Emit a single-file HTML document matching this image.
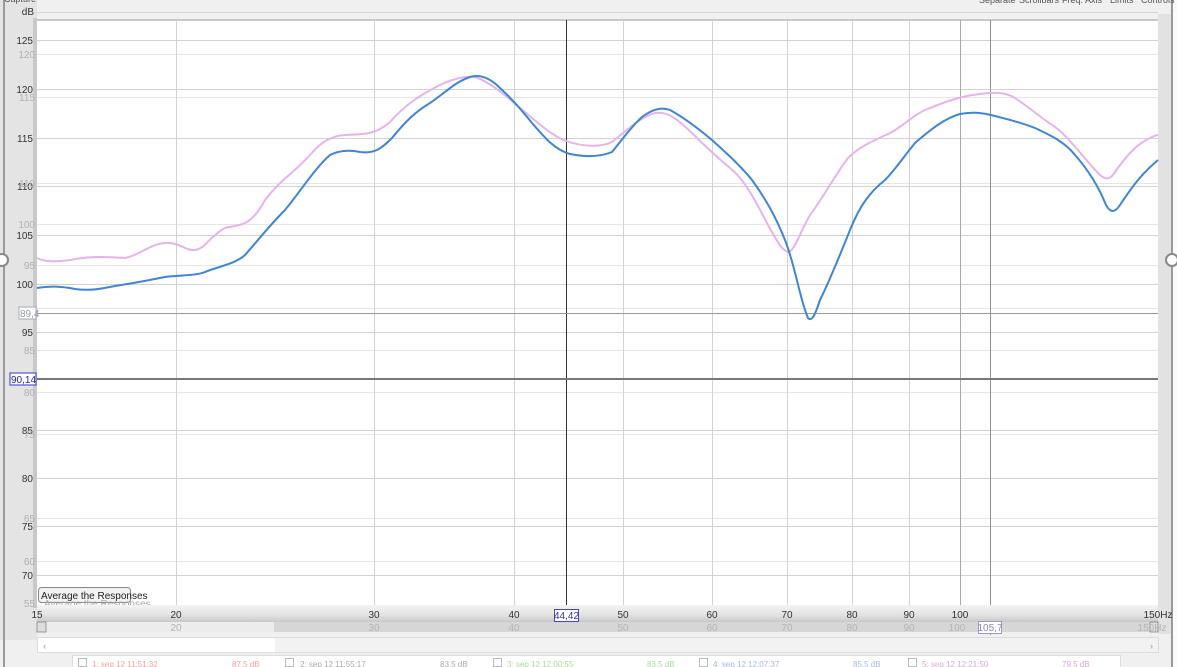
<!DOCTYPE html>
<html><head><meta charset="utf-8"><style>
html,body{margin:0;padding:0;width:1177px;height:667px;overflow:hidden;background:#f0f0f0;font-family:"Liberation Sans",sans-serif}
svg{display:block}
text{font-family:"Liberation Sans",sans-serif}
</style></head><body>
<svg width="1177" height="667" viewBox="0 0 1177 667" xmlns="http://www.w3.org/2000/svg">
<defs>
<linearGradient id="ax" x1="0" y1="0" x2="0" y2="1"><stop offset="0" stop-color="#f4f4f4"/><stop offset="0.6" stop-color="#e2e2e2"/><stop offset="1" stop-color="#c8c8c8"/></linearGradient>
</defs>
<rect x="0" y="0" width="1177" height="667" fill="#f0f0f0"/>
<!-- left strip -->
<rect x="0" y="0" width="37" height="640" fill="#e4e4e4"/>
<rect x="3" y="0" width="2" height="667" fill="#9a9a9a"/>
<rect x="33" y="18" width="4" height="590" fill="#c9c9c9"/>
<!-- right strip -->
<rect x="1158" y="14" width="14" height="620" fill="#e2e2e2"/>
<rect x="1171" y="0" width="2" height="667" fill="#9a9a9a"/>
<rect x="1173" y="0" width="4" height="667" fill="#fafafa"/>
<!-- top line -->
<rect x="37" y="12" width="1121" height="1" fill="#d6d6d6"/>
<!-- plot -->
<rect x="37" y="20" width="1121" height="585" fill="#ffffff"/>
<rect x="37" y="19" width="1121" height="2" fill="#c8c8c8"/>
<g stroke="#e6e6e6" stroke-width="1">
<line x1="37" y1="54.5" x2="1158" y2="54.5"/><line x1="37" y1="97.5" x2="1158" y2="97.5"/><line x1="37" y1="183.5" x2="1158" y2="183.5"/><line x1="37" y1="224.5" x2="1158" y2="224.5"/><line x1="37" y1="265.5" x2="1158" y2="265.5"/><line x1="37" y1="308.5" x2="1158" y2="308.5"/><line x1="37" y1="350.5" x2="1158" y2="350.5"/><line x1="37" y1="392.5" x2="1158" y2="392.5"/><line x1="37" y1="434.5" x2="1158" y2="434.5"/><line x1="37" y1="518.5" x2="1158" y2="518.5"/><line x1="37" y1="561.5" x2="1158" y2="561.5"/>
</g>
<g stroke="#d2d2d2" stroke-width="1">
<line x1="37" y1="40.5" x2="1158" y2="40.5"/><line x1="37" y1="89.5" x2="1158" y2="89.5"/><line x1="37" y1="138.5" x2="1158" y2="138.5"/><line x1="37" y1="186.5" x2="1158" y2="186.5"/><line x1="37" y1="235.5" x2="1158" y2="235.5"/><line x1="37" y1="284.5" x2="1158" y2="284.5"/><line x1="37" y1="332.5" x2="1158" y2="332.5"/><line x1="37" y1="430.5" x2="1158" y2="430.5"/><line x1="37" y1="478.5" x2="1158" y2="478.5"/><line x1="37" y1="526.5" x2="1158" y2="526.5"/><line x1="37" y1="575.5" x2="1158" y2="575.5"/>
<line x1="176.5" y1="20" x2="176.5" y2="605"/><line x1="374.5" y1="20" x2="374.5" y2="605"/><line x1="514.5" y1="20" x2="514.5" y2="605"/><line x1="623.5" y1="20" x2="623.5" y2="605"/><line x1="712.5" y1="20" x2="712.5" y2="605"/><line x1="787.5" y1="20" x2="787.5" y2="605"/><line x1="852.5" y1="20" x2="852.5" y2="605"/><line x1="909.5" y1="20" x2="909.5" y2="605"/>
</g>
<line x1="960.5" y1="20" x2="960.5" y2="605" stroke="#a8a8a8"/>
<line x1="990.5" y1="20" x2="990.5" y2="635" stroke="#909090"/>
<line x1="566.5" y1="20" x2="566.5" y2="612" stroke="#333"/>
<line x1="37" y1="313.5" x2="1158" y2="313.5" stroke="#999"/>
<line x1="37" y1="379" x2="1158" y2="379" stroke="#777" stroke-width="2"/>
<!-- curves -->
<path fill="none" stroke="#e4b4ea" stroke-width="2" d="M37,258 C45,262 55,262 70,260 C85,257 100,256 125,258 C140,255 150,244 165,243 C180,242 185,251 195,250 C205,249 210,236 225,228 C240,224 250,228 265,200 C280,180 295,172 310,155 C320,143 330,136 345,135 C365,134 375,135 390,122 C405,105 420,95 440,85 C455,78 465,76 475,77 C490,82 505,95 520,108 C535,120 550,135 566,141 C580,146 600,148 612,142 C625,132 640,117 655,113 C670,111 680,122 692,133 C705,146 718,158 730,168 C745,180 755,200 768,225 C778,243 783,252 789,252 C796,248 800,232 810,215 C825,195 835,175 848,158 C860,146 875,140 890,133 C902,127 912,116 925,110 C945,102 960,96 980,94 C995,92 1005,92 1015,98 C1030,108 1040,117 1055,127 C1070,138 1085,160 1100,175 C1106,180 1110,180 1115,172 C1125,158 1135,145 1150,138 C1154,136 1156,135 1158,135"/>
<path fill="none" stroke="#3f85d3" stroke-width="2" d="M37,288 C50,286 60,286 75,289 C90,291 100,289 115,286 C135,283 150,280 165,277 C180,275 195,276 205,272 C220,266 235,264 245,255 C260,238 270,225 285,210 C300,192 315,168 330,155 C340,150 350,150 360,152 C375,154 382,148 392,138 C405,122 415,112 430,103 C445,93 455,82 470,77 C480,74 490,78 500,88 C510,97 520,108 532,123 C545,138 555,150 570,154 C585,157 600,157 612,152 C622,140 630,128 642,117 C650,111 660,106 670,110 C685,118 700,130 712,140 C725,152 740,165 752,180 C765,198 775,215 785,240 C795,265 800,300 808,318 C812,322 815,315 820,300 C830,280 840,255 850,230 C860,205 870,192 885,180 C895,170 905,155 915,143 C930,130 945,118 960,114 C970,112 980,112 995,116 C1010,120 1020,122 1035,128 C1050,135 1065,142 1075,155 C1090,172 1100,190 1106,205 C1110,212 1114,214 1120,205 C1130,190 1140,175 1158,160"/>
<!-- y labels -->
<g font-size="10" fill="#333" text-anchor="end">
<text x="34" y="15">dB</text>
<text x="33" y="44">125</text><text x="33" y="93">120</text><text x="33" y="142">115</text><text x="33" y="190">110</text><text x="33" y="239">105</text><text x="33" y="288">100</text><text x="33" y="336">95</text><text x="33" y="434">85</text><text x="33" y="482">80</text><text x="33" y="530">75</text><text x="33" y="579">70</text>
</g>
<g font-size="10" fill="#b0b0b0" text-anchor="end">
<text x="35" y="58">120</text><text x="35" y="101">115</text><text x="35" y="187">110</text><text x="35" y="228">100</text><text x="35" y="269">95</text><text x="35" y="354">85</text><text x="35" y="396">80</text><text x="35" y="438">75</text><text x="35" y="522">65</text><text x="35" y="565">60</text><text x="35" y="607">55</text>
</g>
<rect x="19" y="307" width="17" height="12" fill="#fff" stroke="#aab" /><text x="20" y="317" font-size="10" fill="#99a">89,4</text>
<rect x="10" y="373" width="26" height="12" fill="#fff" stroke="#33c"/><text x="11" y="383" font-size="10" fill="#22b">90,14</text>
<!-- button -->
<rect x="38.5" y="587.5" width="92" height="15" rx="3" fill="#f2f2f2" stroke="#888"/>
<text x="41" y="599" font-size="10" fill="#222">Average the Responses</text>
<text x="44" y="607" font-size="10" fill="#aaa">Average the Responses</text>
<!-- x axis band -->
<rect x="37" y="605" width="1121" height="17" fill="url(#ax)"/>
<g font-size="10" fill="#333" text-anchor="middle">
<text x="37" y="618">15</text><text x="176" y="618">20</text><text x="374" y="618">30</text><text x="514" y="618">40</text><text x="623" y="618">50</text><text x="712" y="618">60</text><text x="787" y="618">70</text><text x="852" y="618">80</text><text x="909" y="618">90</text><text x="960" y="618">100</text><text x="1158" y="618">150Hz</text>
</g>
<rect x="554.5" y="609.5" width="24" height="12" fill="#fff" stroke="#44c"/><text x="566.5" y="619" font-size="10" fill="#33b" text-anchor="middle">44,42</text>
<!-- range bar -->
<rect x="37" y="622" width="237" height="10" fill="#ececec"/>
<rect x="274" y="622" width="884" height="10" fill="#d6d6d6"/>
<rect x="37" y="622" width="9" height="10" fill="#ddd" stroke="#777" stroke-width="0.7"/>
<rect x="1150" y="622" width="8" height="10" fill="#ddd" stroke="#777" stroke-width="0.7"/>
<g font-size="10" fill="#b4b4b4" text-anchor="middle">
<text x="176" y="631">20</text><text x="374" y="631">30</text><text x="514" y="631">40</text><text x="623" y="631">50</text><text x="712" y="631">60</text><text x="787" y="631">70</text><text x="852" y="631">80</text><text x="909" y="631">90</text><text x="957" y="631">100</text><text x="1152" y="631">150Hz</text>
</g>
<rect x="978.5" y="621.5" width="23" height="12" fill="#fff" stroke="#99c"/><text x="990" y="631" font-size="10" fill="#88b" text-anchor="middle">105,7</text>
<!-- scrollbar -->
<rect x="37.5" y="637.5" width="1121" height="15" fill="#fff" stroke="#dcdcdc"/>
<rect x="275" y="638" width="883" height="14" fill="#f2f2f2"/>
<text x="43" y="649" font-size="9" fill="#999">‹</text><text x="1150" y="649" font-size="9" fill="#999">›</text>
<!-- legend -->
<rect x="72.5" y="655.5" width="1048" height="14" fill="#fff" stroke="#ddd"/>
<g font-size="8" fill="none">
<rect x="78.5" y="658.5" width="8" height="8" stroke="#bbb"/><text x="92" y="667" fill="#f0a0a0">1: sep 12 11:51:32</text><text x="232" y="667" fill="#f0a0a0">87,5 dB</text>
<rect x="285.5" y="658.5" width="8" height="8" stroke="#bbb"/><text x="300" y="667" fill="#aaa">2: sep 12 11:55:17</text><text x="440" y="667" fill="#aaa">83,5 dB</text>
<rect x="493.5" y="658.5" width="8" height="8" stroke="#bbb"/><text x="507" y="667" fill="#a8d8a0">3: sep 12 12:00:55</text><text x="647" y="667" fill="#a8d8a0">83,5 dB</text>
<rect x="699.5" y="658.5" width="8" height="8" stroke="#bbb"/><text x="713" y="667" fill="#a8b8e0">4: sep 12 12:07:37</text><text x="853" y="667" fill="#a8b8e0">85,5 dB</text>
<rect x="908.5" y="658.5" width="8" height="8" stroke="#bbb"/><text x="922" y="667" fill="#d8a8d8">5: sep 12 12:21:50</text><text x="1062" y="667" fill="#d8a8d8">79,5 dB</text>
</g>
<!-- top header text -->
<g font-size="9" fill="#555">
<text x="979" y="3">Separate</text><text x="1019" y="3">Scrollbars</text><text x="1062" y="3">Freq. Axis</text><text x="1110" y="3">Limits</text><text x="1141" y="3">Controls</text>
<text x="4" y="2">Capture</text>
</g>
<!-- handles -->
<circle cx="2" cy="260" r="6" fill="#fff" stroke="#888" stroke-width="2"/>
<circle cx="1172" cy="260" r="6" fill="#fff" stroke="#888" stroke-width="2"/>
</svg>
</body></html>
